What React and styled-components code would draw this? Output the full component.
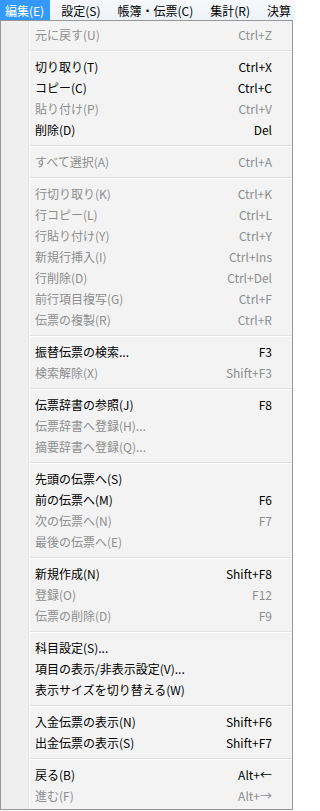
import styled, { createGlobalStyle } from "styled-components";

const GlobalStyle = createGlobalStyle`
  html, body {
    margin: 0;
    padding: 0;
    background: #ffffff;
  }
  body {
    font-family: "Noto Sans CJK JP", "Noto Sans", sans-serif;
    font-size: 12px;
  }
`;

const MENUS = ["編集(E)", "設定(S)", "帳簿・伝票(C)", "集計(R)", "決算・"];

// null = separator
const ITEMS = [
  { label: "元に戻す(U)", key: "Ctrl+Z", off: true },
  null,
  { label: "切り取り(T)", key: "Ctrl+X" },
  { label: "コピー(C)", key: "Ctrl+C" },
  { label: "貼り付け(P)", key: "Ctrl+V", off: true },
  { label: "削除(D)", key: "Del" },
  null,
  { label: "すべて選択(A)", key: "Ctrl+A", off: true },
  null,
  { label: "行切り取り(K)", key: "Ctrl+K", off: true },
  { label: "行コピー(L)", key: "Ctrl+L", off: true },
  { label: "行貼り付け(Y)", key: "Ctrl+Y", off: true },
  { label: "新規行挿入(I)", key: "Ctrl+Ins", off: true },
  { label: "行削除(D)", key: "Ctrl+Del", off: true },
  { label: "前行項目複写(G)", key: "Ctrl+F", off: true },
  { label: "伝票の複製(R)", key: "Ctrl+R", off: true },
  null,
  { label: "振替伝票の検索...", key: "F3" },
  { label: "検索解除(X)", key: "Shift+F3", off: true },
  null,
  { label: "伝票辞書の参照(J)", key: "F8" },
  { label: "伝票辞書へ登録(H)...", off: true },
  { label: "摘要辞書へ登録(Q)...", off: true },
  null,
  { label: "先頭の伝票へ(S)" },
  { label: "前の伝票へ(M)", key: "F6" },
  { label: "次の伝票へ(N)", key: "F7", off: true },
  { label: "最後の伝票へ(E)", off: true },
  null,
  { label: "新規作成(N)", key: "Shift+F8" },
  { label: "登録(O)", key: "F12", off: true },
  { label: "伝票の削除(D)", key: "F9", off: true },
  null,
  { label: "科目設定(S)..." },
  { label: "項目の表示/非表示設定(V)..." },
  { label: "表示サイズを切り替える(W)" },
  null,
  { label: "入金伝票の表示(N)", key: "Shift+F6" },
  { label: "出金伝票の表示(S)", key: "Shift+F7" },
  null,
  { label: "戻る(B)", key: "Alt+←" },
  { label: "進む(F)", key: "Alt+→", off: true },
];

const App = () => {
  return (
    <>
      <GlobalStyle />
      <Screen>
        <MenuBar>
          {MENUS.map((m, i) => (
            <MenuTab key={m} $active={i === 0}>
              {m}
            </MenuTab>
          ))}
        </MenuBar>
        <Dropdown>
          {ITEMS.map((item, i) =>
            item ? (
              <Row key={i} $off={item.off}>
                <Label>{item.label}</Label>
                {item.key && <Shortcut>{item.key}</Shortcut>}
              </Row>
            ) : (
              <Separator key={i} />
            )
          )}
        </Dropdown>
      </Screen>
    </>
  );
};

const Screen = styled.div`
  width: 295px;
  height: 811px;
  overflow: hidden;
  display: flex;
  flex-direction: column;
`;

const MenuBar = styled.div`
  height: 20px;
  flex: none;
  display: flex;
  align-items: stretch;
  overflow: hidden;
  background: linear-gradient(#f6f8fb, #eef2f7);
  white-space: nowrap;
`;

const MenuTab = styled.div`
  flex: none;
  display: flex;
  align-items: center;
  padding: 0 6px 0 5px;
  margin-right: 6px;
  color: ${(p) => (p.$active ? "#ffffff" : "#000000")};
  background: ${(p) => (p.$active ? "#3399ff" : "transparent")};
`;

const Dropdown = styled.div`
  flex: none;
  width: 291px;
  padding: 3px 0 3px 0;
  border: 1px solid #979797;
  background: linear-gradient(
    to right,
    #efefef 0,
    #efefef 27px,
    #e2e3e3 27px,
    #e2e3e3 28px,
    #ffffff 28px,
    #ffffff 29px,
    #f3f3f3 29px
  );
`;

const Row = styled.div`
  height: 21px;
  display: flex;
  align-items: center;
  justify-content: space-between;
  padding: 0 20px 0 34px;
  color: ${(p) => (p.$off ? "#8e8e8e" : "#000000")};
  white-space: nowrap;
`;

const Label = styled.span``;

const Shortcut = styled.span``;

const Separator = styled.div`
  height: 11px;
  margin-left: 29px;
  display: flex;
  flex-direction: column;
  justify-content: center;

  &::before {
    content: "";
    height: 1px;
    background: #e0e0e0;
  }
  &::after {
    content: "";
    height: 1px;
    background: #ffffff;
  }
`;

export default App;
